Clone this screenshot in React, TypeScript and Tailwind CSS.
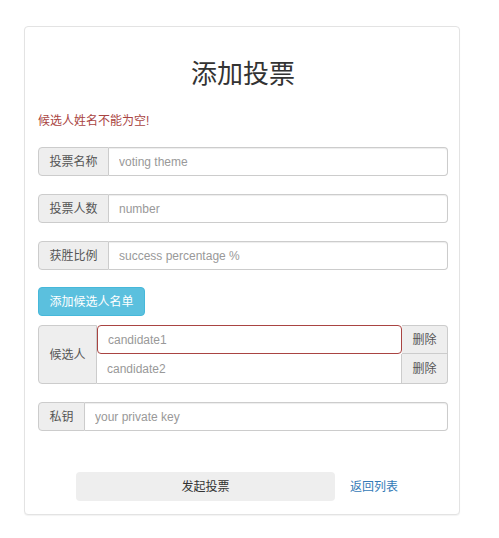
const font = { fontFamily: '"Liberation Sans", "Noto Sans CJK SC", sans-serif' }

function Group({ label, placeholder, addonW }: { label: string; placeholder: string; addonW: string }) {
  return (
    <div className="flex h-[29px] w-full text-[12px]">
      <span
        className={`${addonW} flex items-center justify-center rounded-l-[4px] border border-[#ccc] bg-[#eee] text-[#555]`}
      >
        {label}
      </span>
      <input
        className="flex-1 rounded-r-[4px] border border-l-0 border-[#ccc] bg-white px-[10px] text-[#555] shadow-[inset_0_1px_1px_rgba(0,0,0,0.075)] outline-none placeholder:text-[#999]"
        placeholder={placeholder}
      />
    </div>
  )
}

export default function App() {
  return (
    <div className="min-h-[538px] w-full bg-white pt-[26px]" style={font}>
      <div className="ml-[24px] w-[436px] rounded-[4px] border border-[#e3e3e3] bg-white pb-[13px] pl-[13px] pr-[11px] shadow-[0_1px_1px_rgba(0,0,0,0.05)]">
        <h2 className="pt-[31px] text-center text-[26px] leading-[32px] text-[#333]">添加投票</h2>
        <p className="mt-[22px] text-[12px] leading-[18px] text-[#a94442]">候选人姓名不能为空!</p>

        <div className="mt-[17px] flex flex-col gap-[18px]">
          <Group label="投票名称" placeholder="voting theme" addonW="w-[71px]" />
          <Group label="投票人数" placeholder="number" addonW="w-[71px]" />
          <Group label="获胜比例" placeholder="success percentage %" addonW="w-[71px]" />
        </div>

        <button className="mt-[17px] h-[29px] w-[107px] rounded-[4px] border border-[#46b8da] bg-[#5bc0de] text-[12px] text-white">
          添加候选人名单
        </button>

        <div className="mt-[9px] flex h-[59px] text-[12px]">
          <span className="flex w-[59px] items-center justify-center rounded-l-[4px] border border-[#ccc] bg-[#eee] text-[#555]">
            候选人
          </span>
          <div className="flex flex-1 flex-col">
            <div className="flex h-[29px]">
              <input
                className="flex-1 rounded-[4px] border border-[#a94442] px-[10px] outline-none placeholder:text-[#999]"
                placeholder="candidate1"
              />
              <button className="w-[46px] rounded-tr-[4px] border border-l-0 border-[#ccc] bg-[#eee] text-[#555]">
                删除
              </button>
            </div>
            <div className="flex h-[30px]">
              <input
                className="flex-1 border border-l-0 border-t-0 border-[#ccc] px-[10px] outline-none placeholder:text-[#999]"
                placeholder="candidate2"
              />
              <button className="w-[46px] rounded-br-[4px] border border-l-0 border-t-0 border-[#ccc] bg-[#eee] text-[#555]">
                删除
              </button>
            </div>
          </div>
        </div>

        <div className="mt-[18px]">
          <Group label="私钥" placeholder="your private key" addonW="w-[47px]" />
        </div>

        <div className="mt-[41px] flex items-center">
          <button className="ml-[38px] h-[29px] w-[259px] rounded-[4px] bg-[#eee] text-[12px] text-[#333]">
            发起投票
          </button>
          <a href="#" className="ml-[15px] text-[12px] text-[#337ab7]">
            返回列表
          </a>
        </div>
      </div>
    </div>
  )
}
